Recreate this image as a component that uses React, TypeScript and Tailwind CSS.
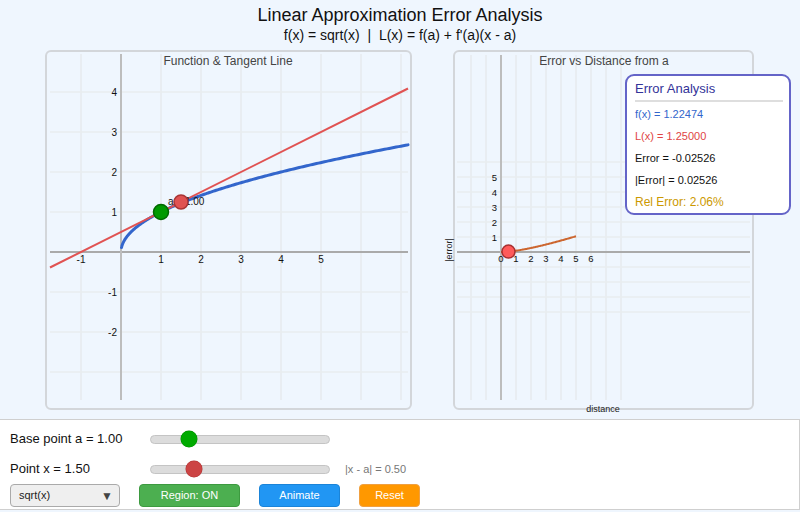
import React from 'react';

// left plot: origin (121, 252), 40px per unit
const LX = (x: number) => 121 + 40 * x;
const LY = (y: number) => 252 - 40 * y;
// right plot: origin (501, 252), 15px per unit
const RX = (x: number) => 501 + 15 * x;
const RY = (y: number) => 252 - 15 * y;

const a = 1;
const px = 1.5;
const f = (x: number) => Math.sqrt(x);
const L = (x: number) => f(a) + (0.5 / Math.sqrt(a)) * (x - a);

function sqrtPath() {
  const pts: string[] = [];
  for (let i = 0; i <= 240; i++) {
    const t = i / 240;
    const x = 0.012 + (7.175 - 0.012) * t * t;
    pts.push(`${LX(x).toFixed(2)},${LY(f(x)).toFixed(2)}`);
  }
  return 'M' + pts.join(' L');
}

function errorPath() {
  const pts: string[] = [];
  for (let i = 0; i <= 100; i++) {
    const d = (5 * i) / 100;
    const e = Math.abs(f(a + d) - L(a + d));
    pts.push(`${RX(d).toFixed(2)},${RY(e).toFixed(2)}`);
  }
  return 'M' + pts.join(' L');
}

function FunctionPlot() {
  const vLines = [-1, 0, 1, 2, 3, 4, 5, 6, 7];
  const hLines = [-3, -2, -1, 0, 1, 2, 3, 4];
  return (
    <svg width={363} height={356} viewBox="47 52 363 356" className="block" style={{ fontFamily: '"Liberation Sans", Arial, sans-serif' }}>
      {vLines.map(i => (
        <line key={'v' + i} x1={LX(i)} y1={54} x2={LX(i)} y2={400} stroke="#e2e4e6" strokeWidth={1} />
      ))}
      {hLines.map(j => (
        <line key={'h' + j} x1={50} y1={LY(j)} x2={408} y2={LY(j)} stroke="#e9ecef" strokeWidth={1.5} />
      ))}
      <line x1={50} y1={252} x2={408} y2={252} stroke="#aaaaaa" strokeWidth={2} />
      <line x1={121} y1={54} x2={121} y2={400} stroke="#bdbdbd" strokeWidth={2} />
      <text x={228} y={65} textAnchor="middle" fontSize={12} fill="#444">Function &amp; Tangent Line</text>
      {[-1, 1, 2, 3, 4, 5].map(i => (
        <text key={'xl' + i} x={LX(i)} y={263} textAnchor="middle" fontSize={10} fill="#111">{i}</text>
      ))}
      {[4, 3, 2, 1, -1, -2].map(j => (
        <text key={'yl' + j} x={117} y={LY(j) + 4} textAnchor="end" fontSize={10} fill="#111">{j}</text>
      ))}
      <path d={sqrtPath()} fill="none" stroke="#3366cc" strokeWidth={3} strokeLinecap="round" />
      <line x1={50} y1={LY(L(-1.775))} x2={408} y2={LY(L(7.175))} stroke="#e05252" strokeWidth={2} />
      <circle cx={LX(a)} cy={LY(f(a))} r={7.5} fill="#009a00" stroke="#006a00" strokeWidth={1.5} />
      <text x={168} y={205} fontSize={10} fill="#111">a = 1.00</text>
      <circle cx={LX(px)} cy={LY(L(px))} r={7} fill="#e05252" stroke="#a83434" strokeWidth={1.5} />
    </svg>
  );
}

function ErrorPlot() {
  const vLines = [-2, -1, 0, 1, 2, 3, 4, 5, 6, 7, 8];
  const hLines = [-4, -3, -2, -1, 0, 1, 2, 3, 4, 5, 6];
  const d = px - a;
  const e = Math.abs(f(px) - L(px));
  return (
    <svg width={297} height={356} viewBox="455 52 297 356" className="block overflow-visible" style={{ fontFamily: '"Liberation Sans", Arial, sans-serif' }}>
      {vLines.map(i => (
        <line key={'v' + i} x1={RX(i)} y1={55} x2={RX(i)} y2={400} stroke="#e2e4e6" strokeWidth={1} />
      ))}
      {hLines.map(j => (
        <line key={'h' + j} x1={457} y1={RY(j)} x2={750} y2={RY(j)} stroke="#e9ecef" strokeWidth={1.5} />
      ))}
      <line x1={457} y1={252} x2={750} y2={252} stroke="#aaaaaa" strokeWidth={2} />
      <line x1={501} y1={55} x2={501} y2={400} stroke="#bdbdbd" strokeWidth={2} />
      <text x={604} y={65} textAnchor="middle" fontSize={12} fill="#444">Error vs Distance from a</text>
      {[0, 1, 2, 3, 4, 5, 6].map(i => (
        <text key={'xl' + i} x={RX(i)} y={262} textAnchor="middle" fontSize={9.5} fill="#111">{i}</text>
      ))}
      {[1, 2, 3, 4, 5].map(j => (
        <text key={'yl' + j} x={497} y={RY(j) + 3.5} textAnchor="end" fontSize={9.5} fill="#111">{j}</text>
      ))}
      <text x={449} y={250} textAnchor="middle" fontSize={9} fill="#222" transform="rotate(-90 449 250)" dy={3}>|error|</text>
      <text x={603} y={412} textAnchor="middle" fontSize={9} fill="#222">distance</text>
      <path d={errorPath()} fill="none" stroke="#cc6630" strokeWidth={2} />
      <circle cx={RX(d)} cy={RY(e)} r={6.5} fill="#ff5a5a" stroke="#a83030" strokeWidth={1.5} />
    </svg>
  );
}

function Slider({ pos, color, border }: { pos: number; color: string; border: string }) {
  return (
    <div className="relative w-[180px] h-[9px] rounded-full bg-[#dcdcdc] border border-[#c4c4c4]">
      <div
        className="absolute top-1/2 -translate-y-1/2 w-[16px] h-[16px] rounded-full"
        style={{ left: pos - 8, backgroundColor: color, boxShadow: `0 0 0 0.5px ${border}` }}
      />
    </div>
  );
}

export default function App() {
  const fx = f(px);
  const lx = L(px);
  const err = fx - lx;
  return (
    <div className="relative w-[800px] h-[512px] bg-[#eff6fe] overflow-hidden" style={{ fontFamily: '"Liberation Sans", Arial, sans-serif' }}>
      {/* Header */}
      <div className="pt-[4px] text-center text-[#111]">
        <h1 className="text-[18px] leading-[22px]">Linear Approximation Error Analysis</h1>
        <p className="text-[14px] leading-[18px]">f(x) = sqrt(x) &nbsp;|&nbsp; L(x) = f(a) + f'(a)(x - a)</p>
      </div>

      {/* Plots */}
      <div className="mt-[6px] pl-[45px] flex gap-[41px]">
        <div className="w-[367px] h-[360px] rounded-[6px] border-2 border-[#d3d6da]">
          <FunctionPlot />
        </div>
        <div className="w-[301px] h-[360px] rounded-[6px] border-2 border-[#d3d6da]">
          <ErrorPlot />
        </div>
      </div>

      {/* Error analysis overlay */}
      <div className="absolute left-[625px] top-[74px] w-[166px] h-[141px] bg-white border-2 border-[#6464c8] rounded-[9px] pl-[8px] pr-[6px] pt-[5px]">
        <div className="text-[13px] leading-[16px] text-[#333399]">Error Analysis</div>
        <div className="mt-[3px] h-[2px] bg-[#dedede]" />
        <div className="mt-px text-[11px] leading-[22px]">
          <div className="text-[#3366cc]">f(x) = {fx.toFixed(5)}</div>
          <div className="text-[#e04444]">L(x) = {lx.toFixed(5)}</div>
          <div className="text-[#111]">Error = {err.toFixed(5)}</div>
          <div className="text-[#111]">|Error| = {Math.abs(err).toFixed(5)}</div>
          <div className="text-[12px] text-[#cc9900]">Rel Error: {((Math.abs(err) / fx) * 100).toFixed(2)}%</div>
        </div>
      </div>

      {/* Controls */}
      <div className="mt-[9px] h-[91px] bg-white border-t border-r border-b border-[#cfcfcf] pl-[10px] pt-[9px] flex flex-col">
        <div className="h-[20px] flex items-center">
          <span className="w-[140px] text-[13px] text-[#111]">Base point a = {a.toFixed(2)}</span>
          <Slider pos={38} color="#00aa00" border="#008800" />
        </div>
        <div className="mt-[10px] h-[20px] flex items-center">
          <span className="w-[140px] text-[13px] text-[#111]">Point x = {px.toFixed(2)}</span>
          <Slider pos={43} color="#cc4444" border="#aa3333" />
          <span className="ml-[15px] text-[11px] text-[#777]">|x - a| = {Math.abs(px - a).toFixed(2)}</span>
        </div>
        <div className="mt-[5px] flex gap-[19px] h-[23px]">
          <div className="w-[110px] h-full rounded-[4px] border border-[#aaa] bg-[#efefef] flex items-center justify-between pl-[8px] pr-[6px] text-[11px] text-[#222]">
            <span>sqrt(x)</span>
            <span className="text-[12px] text-[#444]">▼</span>
          </div>
          <div className="w-[101px] h-full rounded-[4px] bg-[#4caf50] border border-[#3d9a40] text-white text-[11px] flex items-center justify-center">Region: ON</div>
          <div className="w-[81px] h-full rounded-[4px] bg-[#2196f3] border border-[#1b84d8] text-white text-[11px] flex items-center justify-center">Animate</div>
          <div className="w-[61px] h-full rounded-[4px] bg-[#ff9800] border border-[#f0a040] text-white text-[11px] flex items-center justify-center">Reset</div>
        </div>
      </div>
    </div>
  );
}
